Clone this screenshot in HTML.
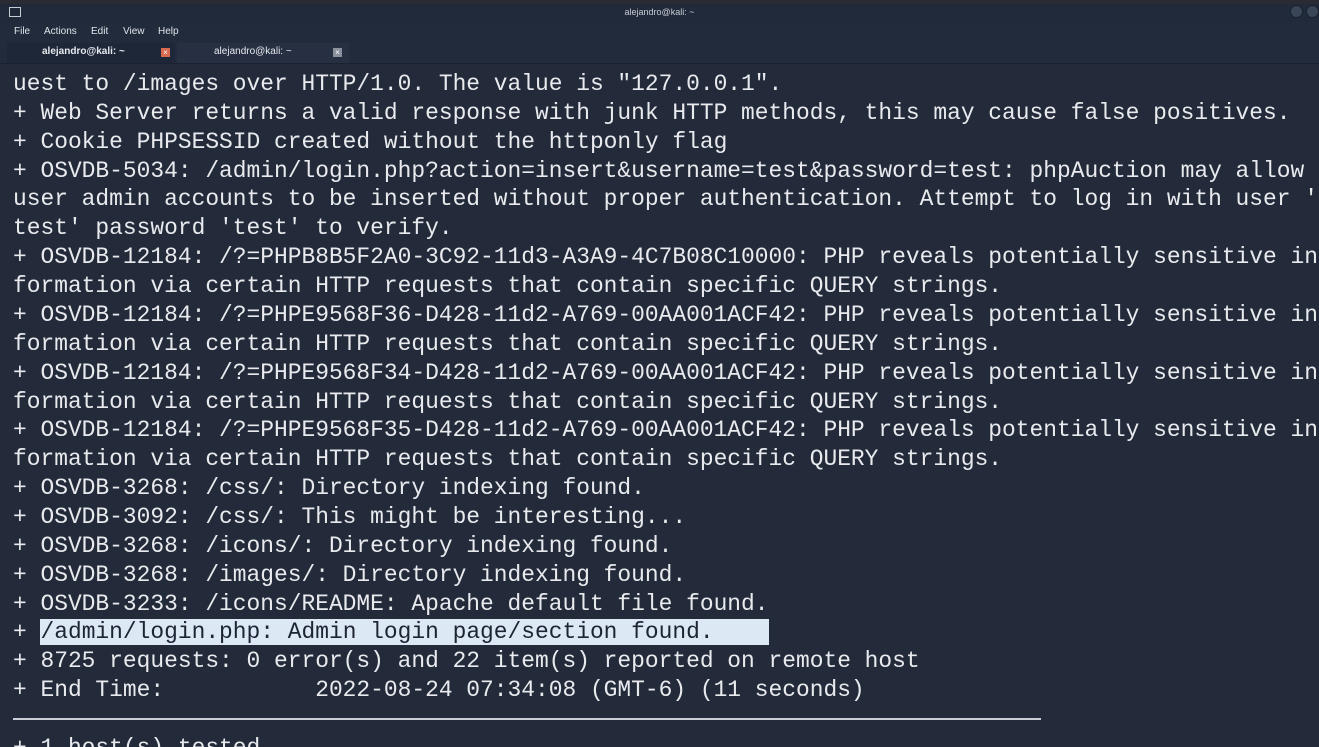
<!DOCTYPE html>
<html><head><meta charset="utf-8"><style>
html,body{margin:0;padding:0;width:1319px;height:747px;overflow:hidden;background:#232b3a;}
.top{position:absolute;left:0;top:0;width:1319px;height:4px;background:#2b2b33;}
.title{position:absolute;left:0;top:4px;width:1319px;height:18px;background:#212a3a;font:9px "Liberation Sans",sans-serif;color:#c8ccd4;text-align:center;line-height:16px;}
.menu{position:absolute;left:0;top:22px;width:1319px;height:20px;background:#222b3c;font:10px "Liberation Sans",sans-serif;color:#dfe3ea;}
.menu span{position:absolute;top:4px;}
.tabs{position:absolute;left:0;top:41px;width:1319px;height:22px;background:#222b3c;border-bottom:1px solid #1a2130;}
.tab{position:absolute;top:2px;height:20px;font:bold 10px "Liberation Sans",sans-serif;color:#e6e9ef;line-height:18px;}
.x{position:absolute;top:5px;width:9px;height:9px;font:8px/9px "Liberation Sans",sans-serif;text-align:center;color:#fff;}
.term{position:absolute;left:0;top:0;width:1319px;height:747px;overflow:hidden;font-family:"Liberation Mono",monospace;font-size:22.9px;color:#e8eaee;white-space:pre;}
.l{position:absolute;left:13px;height:28.86px;line-height:28.86px;}
.hl{background:#dde8f5;color:#1d2433;}
.sep{position:absolute;left:13px;top:718px;width:1028px;height:2px;background:#c9ced6;}
.circ{position:absolute;top:5px;width:11px;height:11px;border-radius:50%;background:#3a4658;border:1px solid #1a2130;}
</style></head><body>
<div class="top"></div>
<div class="title">alejandro@kali: ~<div style="position:absolute;left:9px;top:3px;width:10px;height:8px;border:1px solid #c8ccd4;"></div></div>
<div class="circ" style="left:1290px"></div><div class="circ" style="left:1306px"></div>
<div class="menu"><span style="left:14px">File</span><span style="left:44px">Actions</span><span style="left:91px">Edit</span><span style="left:123px">View</span><span style="left:158px">Help</span></div>
<div class="tabs">
<div class="tab" style="left:7px;width:168px;background:#1e2737;"><span style="position:absolute;left:35px">alejandro@kali: ~</span><div class="x" style="left:154px;background:#d9694f">×</div></div>
<div class="tab" style="left:177px;width:172px;background:#263042;font-weight:normal;"><span style="position:absolute;left:37px">alejandro@kali: ~</span><div class="x" style="left:156px;background:#8b919c">×</div></div>
</div>
<div class="term">
<div class="l" style="top:70px">uest to /images over HTTP/1.0. The value is "127.0.0.1".</div>
<div class="l" style="top:98.9px">+ Web Server returns a valid response with junk HTTP methods, this may cause false positives.</div>
<div class="l" style="top:127.7px">+ Cookie PHPSESSID created without the httponly flag</div>
<div class="l" style="top:156.6px">+ OSVDB-5034: /admin/login.php?action=insert&amp;username=test&amp;password=test: phpAuction may allow</div>
<div class="l" style="top:185.4px">user admin accounts to be inserted without proper authentication. Attempt to log in with user '</div>
<div class="l" style="top:214.3px">test' password 'test' to verify.</div>
<div class="l" style="top:243.2px">+ OSVDB-12184: /?=PHPB8B5F2A0-3C92-11d3-A3A9-4C7B08C10000: PHP reveals potentially sensitive in</div>
<div class="l" style="top:272px">formation via certain HTTP requests that contain specific QUERY strings.</div>
<div class="l" style="top:300.9px">+ OSVDB-12184: /?=PHPE9568F36-D428-11d2-A769-00AA001ACF42: PHP reveals potentially sensitive in</div>
<div class="l" style="top:329.7px">formation via certain HTTP requests that contain specific QUERY strings.</div>
<div class="l" style="top:358.6px">+ OSVDB-12184: /?=PHPE9568F34-D428-11d2-A769-00AA001ACF42: PHP reveals potentially sensitive in</div>
<div class="l" style="top:387.5px">formation via certain HTTP requests that contain specific QUERY strings.</div>
<div class="l" style="top:416.3px">+ OSVDB-12184: /?=PHPE9568F35-D428-11d2-A769-00AA001ACF42: PHP reveals potentially sensitive in</div>
<div class="l" style="top:445.2px">formation via certain HTTP requests that contain specific QUERY strings.</div>
<div class="l" style="top:474px">+ OSVDB-3268: /css/: Directory indexing found.</div>
<div class="l" style="top:502.9px">+ OSVDB-3092: /css/: This might be interesting...</div>
<div class="l" style="top:531.8px">+ OSVDB-3268: /icons/: Directory indexing found.</div>
<div class="l" style="top:560.6px">+ OSVDB-3268: /images/: Directory indexing found.</div>
<div class="l" style="top:589.5px">+ OSVDB-3233: /icons/README: Apache default file found.</div>
<div class="l" style="top:618.3px">+ <span class="hl">/admin/login.php: Admin login page/section found.    </span></div>
<div class="l" style="top:647.2px">+ 8725 requests: 0 error(s) and 22 item(s) reported on remote host</div>
<div class="l" style="top:676px">+ End Time:           2022-08-24 07:34:08 (GMT-6) (11 seconds)</div>
<div class="l" style="top:733.8px">+ 1 host(s) tested</div>
</div>
<div class="sep"></div>
</body></html>
